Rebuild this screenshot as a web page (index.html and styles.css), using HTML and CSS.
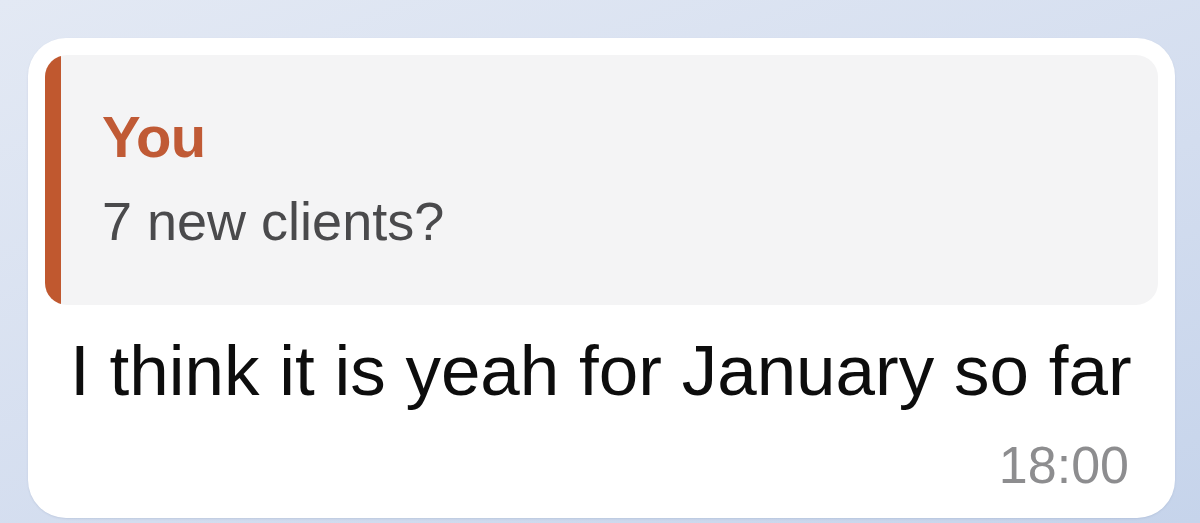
FILE: index.html
```html
<!DOCTYPE html>
<html lang="en">
<head>
<meta charset="UTF-8">
<meta name="viewport" content="width=device-width, initial-scale=1.0">
<title>Reply</title>
<link rel="stylesheet" href="styles.css">
</head>
<body>
<div class="chat">
    <div class="bubble">
        <div class="reply">
            <div class="reply__bar"></div>
            <div class="reply__body">
                <div class="reply__name">You</div>
                <div class="reply__text">7 new clients?</div>
            </div>
        </div>
        <div class="message">I think it is yeah for January so far</div>
        <div class="time">18:00</div>
    </div>
</div>
</body>
</html>
```

FILE: styles.css
```css
body {
    margin: 0;
    padding: 0;
    font-family: "Liberation Sans", Arial, sans-serif;
    background: linear-gradient(160deg, #e3e9f4 0%, #d3ddef 60%, #c6d4eb 100%);
    height: 523px;
    overflow: hidden;
}
.chat {
    padding: 38px 25px 0 28px;
}
.bubble {
    background-color: #fff;
    border-radius: 38px;
    padding: 17px 17px 27px 17px;
    box-shadow: 0 1px 2px rgba(80, 100, 140, 0.15);
}
.reply {
    display: flex;
    height: 250px;
    background-color: #f4f4f5;
    border-radius: 22px;
    overflow: hidden;
}
.reply__bar {
    width: 16px;
    background-color: #c0582f;
}
.reply__body {
    padding: 53px 0 0 41px;
}
.reply__name {
    font-size: 58px;
    line-height: 58px;
    font-weight: bold;
    color: #c05a35;
    letter-spacing: -0.5px;
}
.reply__text {
    margin-top: 28px;
    font-size: 54px;
    line-height: 54px;
    color: #4a4a4c;
}
.message {
    margin-top: 30px;
    padding-left: 25px;
    font-size: 71px;
    line-height: 71px;
    color: #0d0d0d;
}
.time {
    margin-top: 33px;
    padding-right: 29px;
    text-align: right;
    font-size: 52px;
    line-height: 52px;
    color: #8d8d8f;
}
```
